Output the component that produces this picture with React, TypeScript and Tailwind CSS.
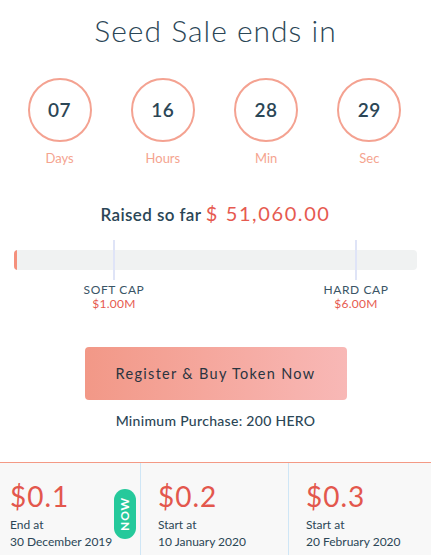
const units = [
  { value: '07', label: 'Days' },
  { value: '16', label: 'Hours' },
  { value: '28', label: 'Min' },
  { value: '29', label: 'Sec' },
]

const caps = [
  { label: 'SOFT CAP', amount: '$1.00M' },
  { label: 'HARD CAP', amount: '$6.00M' },
]

const stages = [
  { price: '$0.1', caption: 'End at', date: '30 December 2019', now: true },
  { price: '$0.2', caption: 'Start at', date: '10 January 2020', now: false },
  { price: '$0.3', caption: 'Start at', date: '20 February 2020', now: false },
]

export default function App() {
  return (
    <div className="w-[431px] h-[555px] overflow-hidden bg-white font-['Lato',sans-serif] text-[#2b4656]">
      <h1 className="pt-[12px] text-center text-[30px] leading-[36px] font-light tracking-[1px]">
        Seed Sale ends in
      </h1>

      <div className="mt-[30px] grid grid-cols-4 pl-[8px] pr-[10px]">
        {units.map((u) => (
          <div key={u.label} className="flex flex-col items-center">
            <div className="flex h-[64px] w-[64px] items-center justify-center rounded-full border-2 border-[#f4a291] text-[19px] font-semibold tracking-[0.5px]">
              {u.value}
            </div>
            <div className="mt-[8px] text-[13px] leading-[16px] text-[#f5a48f]">{u.label}</div>
          </div>
        ))}
      </div>

      <p className="mt-[35px] text-center text-[17px] leading-[24px] font-semibold tracking-[0.4px]">
        Raised so far{' '}
        <span className="text-[20px] font-normal tracking-[1.6px] text-[#e65a50]">$ 51,060.00</span>
      </p>

      {/* progress bar sits behind the cap markers */}
      <div className="relative mx-[14px] mt-[13px]">
        <div className="absolute inset-x-0 top-[10px] h-[20px] overflow-hidden rounded-[4px] bg-[#f0f2f2]">
          <div className="h-full w-[3px] bg-[#f4907c]" />
        </div>
        <div className="relative flex gap-[122px] pl-[40px]">
          {caps.map((c) => (
            <div key={c.label} className="flex w-[120px] flex-col items-center">
              <div className="h-[40px] w-[2px] bg-[#dfe4f7]" />
              <div className="mt-[3px] text-[12px] leading-[14px] tracking-[0.6px] text-[#3a5566]">
                {c.label}
              </div>
              <div className="text-[12px] leading-[14px] tracking-[0.3px] text-[#e65a50]">{c.amount}</div>
            </div>
          ))}
        </div>
      </div>

      <div className="mt-[36px] flex justify-center">
        <button className="h-[53px] w-[262px] rounded-[4px] bg-gradient-to-r from-[#f29887] to-[#f8b8b6] text-[14.5px] tracking-[1.3px] text-[#2a3440]">
          Register &amp; Buy Token Now
        </button>
      </div>

      <p className="mt-[13px] text-center text-[14px] leading-[16px] font-medium tracking-[0.3px]">
        Minimum Purchase: 200 HERO
      </p>

      <div className="mt-[33px] grid h-[100px] grid-cols-[140px_148px_1fr] border-t border-[#f49a85] bg-[#f8f8f8]">
        {stages.map((s, i) => (
          <div
            key={s.price}
            className={`relative pt-[16px] ${i > 0 ? 'border-l border-[#cfe6f6] pl-[17px]' : 'pl-[10px]'}`}
          >
            <div className="text-[28px] leading-[34px] tracking-[1px] text-[#e3574d]">{s.price}</div>
            <div className="mt-[4px] text-[12px] leading-[16px]">{s.caption}</div>
            <div className="mt-[1px] text-[12px] leading-[16px]">{s.date}</div>
            {s.now && (
              <div className="absolute left-[114px] top-[26px] flex h-[50px] w-[22px] items-center justify-center rounded-full bg-[#25c99b]">
                <span className="-rotate-90 text-[12px] font-bold tracking-[0.8px] text-white">NOW</span>
              </div>
            )}
          </div>
        ))}
      </div>
    </div>
  )
}
